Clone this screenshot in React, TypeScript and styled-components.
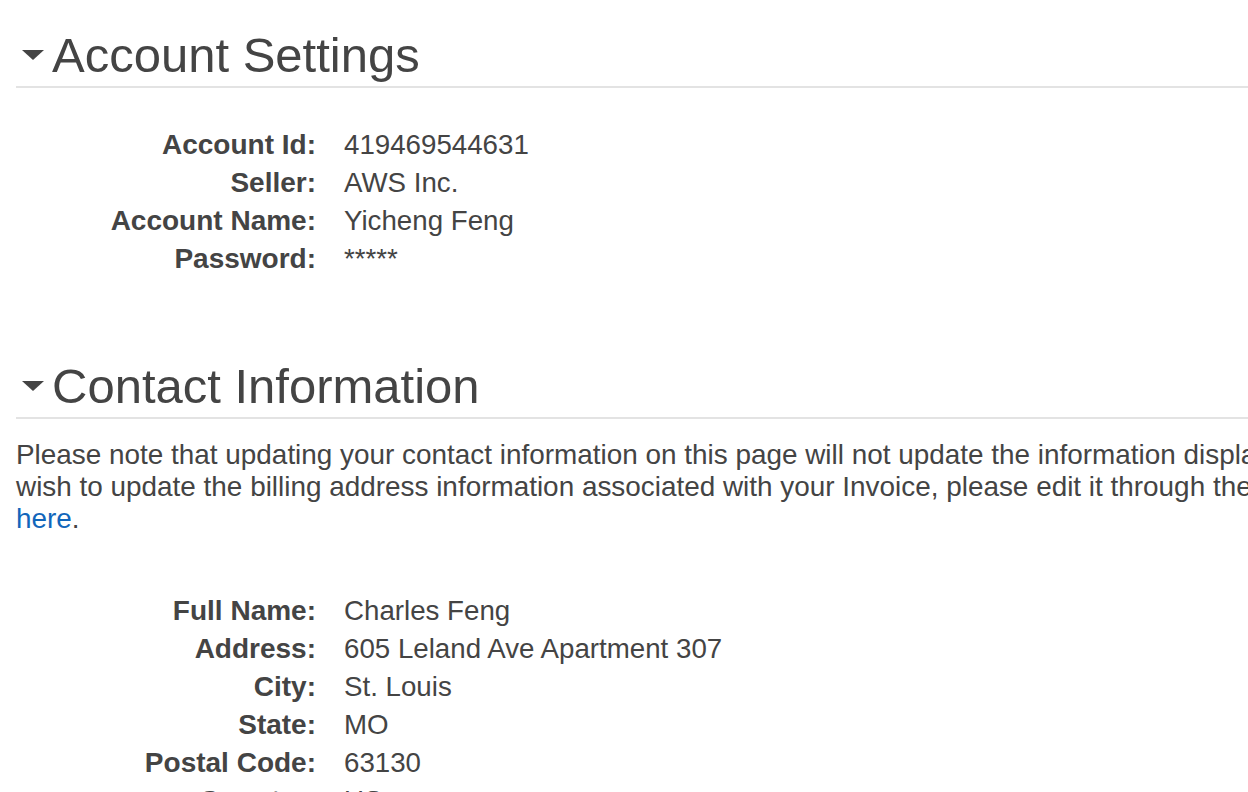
import styled, { createGlobalStyle } from "styled-components";

const GlobalStyle = createGlobalStyle`
  html, body {
    margin: 0;
    padding: 0;
    overflow: hidden;
    background: #ffffff;
  }
  body {
    font-family: "Liberation Sans", Arial, Helvetica, sans-serif;
    color: #444444;
  }
`;

type Field = { label: string; value: string };

const accountFields: Field[] = [
  { label: "Account Id:", value: "419469544631" },
  { label: "Seller:", value: "AWS Inc." },
  { label: "Account Name:", value: "Yicheng Feng" },
  { label: "Password:", value: "*****" },
];

const contactFields: Field[] = [
  { label: "Full Name:", value: "Charles Feng" },
  { label: "Address:", value: "605 Leland Ave Apartment 307" },
  { label: "City:", value: "St. Louis" },
  { label: "State:", value: "MO" },
  { label: "Postal Code:", value: "63130" },
  { label: "Country:", value: "US" },
];

const Caret = () => (
  <StyledCaret width="22" height="10" viewBox="0 0 22 10">
    <path d="M0 0 L22 0 L11 10 Z" fill="#444444" />
  </StyledCaret>
);

const FieldList = ({ fields }: { fields: Field[] }) => (
  <StyledFieldGrid>
    {fields.map((f) => (
      <StyledFieldRow key={f.label}>
        <StyledLabel>{f.label}</StyledLabel>
        <StyledValue>{f.value}</StyledValue>
      </StyledFieldRow>
    ))}
  </StyledFieldGrid>
);

const App = () => {
  return (
    <StyledPage>
      <GlobalStyle />
      <StyledSection>
        <StyledHeading>
          <Caret />
          <span>Account Settings</span>
        </StyledHeading>
        <FieldList fields={accountFields} />
      </StyledSection>

      <StyledSection $spaced>
        <StyledHeading>
          <Caret />
          <span>Contact Information</span>
        </StyledHeading>
        <StyledNote>
          Please note that updating your contact information on this page will not update the information displayed on your PDF invoices. If you
          <br />
          wish to update the billing address information associated with your Invoice, please edit it through the Payment Methods page by clicking
          <br />
          <StyledLink href="#">here</StyledLink>.
        </StyledNote>
        <StyledContactFields>
          <FieldList fields={contactFields} />
        </StyledContactFields>
      </StyledSection>
    </StyledPage>
  );
};

export default App;

const StyledPage = styled.div`
  width: 1500px;
  padding: 27px 0 0 16px;
  box-sizing: border-box;
`;

const StyledSection = styled.section<{ $spaced?: boolean }>`
  display: flex;
  flex-flow: column nowrap;
  margin-top: ${(p) => (p.$spaced ? "80px" : "0")};
`;

const StyledHeading = styled.h2`
  display: flex;
  align-items: center;
  gap: 8px;
  margin: 0;
  padding: 0 0 3px 6px;
  font-size: 49px;
  font-weight: 400;
  line-height: 56px;
  color: #444444;
  border-bottom: 2px solid #e3e3e3;
`;

const StyledCaret = styled.svg`
  flex: none;
`;

const StyledFieldGrid = styled.div`
  display: flex;
  flex-flow: column nowrap;
  margin-top: 38px;
`;

const StyledFieldRow = styled.div`
  display: grid;
  grid-template-columns: 300px 1fr;
  column-gap: 28px;
  font-size: 28px;
  line-height: 38px;
`;

const StyledLabel = styled.div`
  text-align: right;
  font-weight: 700;
  color: #444444;
`;

const StyledValue = styled.div`
  font-size: 27.7px;
  color: #444444;
`;

const StyledNote = styled.p`
  margin: 20px 0 0;
  font-size: 27.9px;
  line-height: 32px;
  white-space: nowrap;
  color: #444444;
`;

const StyledLink = styled.a`
  color: #1166bb;
  text-decoration: none;
`;

const StyledContactFields = styled.div`
  margin-top: 19px;
`;
